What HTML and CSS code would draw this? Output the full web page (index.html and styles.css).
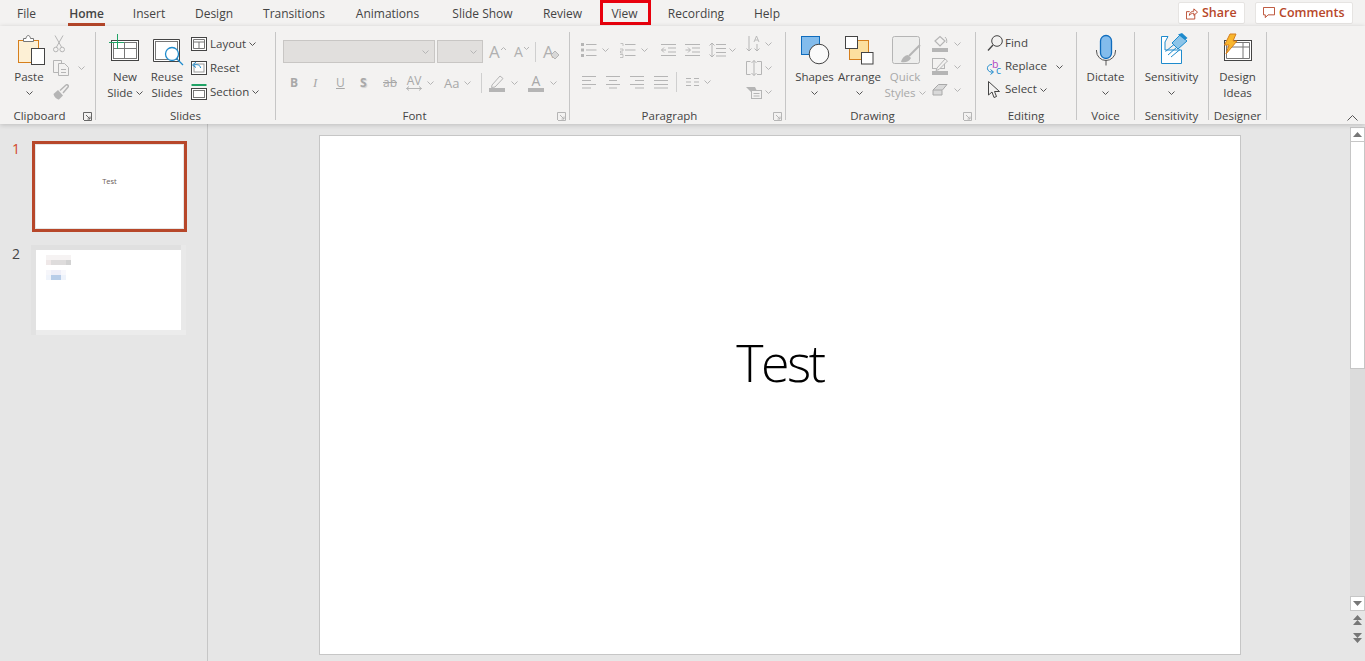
FILE: index.html
```html
<!DOCTYPE html>
<html lang="en">
<head>
<meta charset="utf-8">
<title>PowerPoint</title>
<link rel="stylesheet" href="styles.css">
</head>
<body>
<svg class="sprite" width="0" height="0">
  <symbol id="chev" viewBox="0 0 7 4"><polyline points="0.5,0.5 3.5,3.5 6.5,0.5" fill="none" stroke="currentColor" stroke-width="1"/></symbol>
  <symbol id="launch" viewBox="0 0 9 9"><path d="M0.5 8V0.5H8.5V8.5H1M3 3L7 7M7 4.5V7H4.5" fill="none" stroke="currentColor"/></symbol>
</svg>
<div class="app">
  <header class="tabbar">
    <nav class="tabs">
      <div class="tab"><span>File</span></div>
      <div class="tab tab-active"><span>Home</span></div>
      <div class="tab"><span>Insert</span></div>
      <div class="tab"><span>Design</span></div>
      <div class="tab"><span>Transitions</span></div>
      <div class="tab"><span>Animations</span></div>
      <div class="tab"><span>Slide Show</span></div>
      <div class="tab"><span>Review</span></div>
      <div class="tab tab-marked"><span>View</span></div>
      <div class="tab"><span>Recording</span></div>
      <div class="tab"><span>Help</span></div>
    </nav>
    <div class="actions">
      <button class="action action-share">
        <svg width="12" height="13" viewBox="0 0 13 13" fill="none" stroke="#b7472a"><path d="M9.5 7.5V12.5H0.5V4.5H4M3.5 8.5C4 5.5 6 4 8.5 4V1.5L12.5 5L8.5 8.5V6.2C6.5 6.2 5 7 3.5 8.5Z"/></svg>
        <span>Share</span>
      </button>
      <button class="action action-comments">
        <svg width="12" height="12" viewBox="0 0 13 13" fill="none" stroke="#b7472a"><path d="M0.5 0.5H12.5V8.5H5.5L2.5 11.5V8.5H0.5Z"/></svg>
        <span>Comments</span>
      </button>
    </div>
  </header>

  <section class="ribbon">
    <div class="group g-clipboard">
      <div class="content content-clipboard">
        <div class="big">
          <svg class="big-icon" width="38" height="37" viewBox="0 0 38 37" fill="none">
            <rect x="8.5" y="8.5" width="20" height="22" fill="#fdf0d5" stroke="#d67f1c"/>
            <path d="M13.5 9.5V6.5H16C16.5 2.5 20 2.5 20.500 6.5H23.500V9.500Z" fill="#fff" stroke="#777"/>
            <rect x="21.500" y="16.500" width="13" height="16" fill="#fff" stroke="#444"/>
          </svg>
          <div class="big-line">Paste</div>
          <div class="big-line"><svg class="chev"><use href="#chev"/></svg></div>
        </div>
        <div class="col">
          <div class="item off">
            <svg width="12" height="18" viewBox="0 0 12 18" fill="none" stroke="#b5b5b5"><path d="M2 0.500L8.500 12M10 0.500L3.500 12"/><circle cx="2.800" cy="14.500" r="2.300"/><circle cx="9.200" cy="14.500" r="2.300"/></svg>
          </div>
          <div class="item off">
            <svg width="17" height="16" viewBox="0 0 17 16" fill="none" stroke="#b5b5b5"><path d="M5.500 12.500H0.500V0.500H8.500V3"/><path d="M5.500 3.500H11.500L15.500 7.500V15.500H5.500Z"/><path d="M8 9.500H13M8 12.500H13"/></svg>
            <svg class="chev chev-gap"><use href="#chev"/></svg>
          </div>
          <div class="item off">
            <svg width="16" height="16" viewBox="0 0 16 16"><path d="M0.500 10L5 6L10 11.500L6 15.500C4 15.500 1 13 0.500 10Z" fill="#b5b5b5"/><path d="M7 6.500L13 1C14 0 16 1.500 15 3L10 9" fill="none" stroke="#b5b5b5" stroke-width="1.500"/></svg>
          </div>
        </div>
      </div>
      <div class="label-row"><span class="label">Clipboard</span><svg class="launcher launcher-dark"><use href="#launch"/></svg></div>
    </div>

    <div class="group g-slides">
      <div class="content content-slides">
        <div class="big">
          <svg class="big-icon" width="38" height="37" viewBox="0 0 38 37" fill="none">
            <rect x="5.500" y="8.500" width="27" height="20" fill="#fff" stroke="#444"/>
            <rect x="7.500" y="10.500" width="23" height="16" stroke="#777"/>
            <path d="M18.500 10.500V26.500M7.500 16.500H30.500" stroke="#777"/>
            <path d="M11.500 2V17M3 10.500H18" stroke="#21a366"/>
          </svg>
          <div class="big-line">New</div>
          <div class="big-line">Slide <svg class="chev"><use href="#chev"/></svg></div>
        </div>
        <div class="big">
          <svg class="big-icon" width="38" height="37" viewBox="0 0 38 37" fill="none">
            <path d="M5.500 7.500H31.500V29.500H5.500Z" fill="#fff" stroke="#444"/>
            <rect x="7.500" y="9.500" width="22" height="18" stroke="#777"/>
            <circle cx="24" cy="22" r="6.500" fill="#fff" stroke="#1e8bcd" stroke-width="1.300"/>
            <path d="M29 27L35 33" stroke="#1e8bcd" stroke-width="1.300"/>
          </svg>
          <div class="big-line">Reuse</div>
          <div class="big-line">Slides</div>
        </div>
        <div class="col">
          <div class="item">
            <svg width="16" height="14" viewBox="0 0 16 14" fill="none"><rect x="0.500" y="0.500" width="15" height="13" fill="#fff" stroke="#444"/><path d="M2.500 2.500H13.500V11.500H2.500ZM2.500 5H13.500M8 5V11.500" stroke="#777"/></svg>
            <span>Layout</span><svg class="chev"><use href="#chev"/></svg>
          </div>
          <div class="item">
            <svg width="16" height="14" viewBox="0 0 16 14" fill="none"><rect x="0.500" y="0.500" width="15" height="13" fill="#fff" stroke="#444"/><rect x="3" y="3" width="10" height="8" stroke="#999"/><path d="M9.500 7C9.500 4 6 3 3 4M5 1L1.500 4L5 6.500" stroke="#1e8bcd"/></svg>
            <span>Reset</span>
          </div>
          <div class="item">
            <svg width="16" height="16" viewBox="0 0 16 16" fill="none"><path d="M0.500 1H15.500" stroke="#21a366" stroke-width="2"/><rect x="0.500" y="4.500" width="15" height="11" fill="#fff" stroke="#444"/><rect x="2.500" y="6.500" width="11" height="7" stroke="#777"/></svg>
            <span>Section</span><svg class="chev"><use href="#chev"/></svg>
          </div>
        </div>
      </div>
      <div class="label-row"><span class="label">Slides</span></div>
    </div>

    <div class="group g-font">
      <div class="content content-font off">
        <div class="font-row1">
          <div class="combo combo-name"><svg class="chev"><use href="#chev"/></svg></div>
          <div class="combo combo-size"><svg class="chev"><use href="#chev"/></svg></div>
          <div class="glyph-btn glyph-a-big">A<svg class="caret" width="5" height="3" viewBox="0 0 5 3"><polyline points="0,3 2.500,0.500 5,3" fill="none" stroke="#b5b5b5"/></svg></div>
          <div class="glyph-btn glyph-a-small">A<svg class="caret" width="5" height="3" viewBox="0 0 5 3"><polyline points="0,0 2.500,2.500 5,0" fill="none" stroke="#b5b5b5"/></svg></div>
          <div class="vsep vsep-short"></div>
          <div class="glyph-btn glyph-a-clear">A<svg width="8" height="8" viewBox="0 0 8 8"><path d="M0 4L4 0L8 4L4 8Z" fill="#d8d8d8" stroke="#b5b5b5"/></svg></div>
        </div>
        <div class="font-row2">
          <span class="tb tb-b">B</span>
          <span class="tb tb-i">I</span>
          <span class="tb tb-u">U</span>
          <span class="tb tb-s">S</span>
          <span class="tb tb-strike">ab</span>
          <span class="tb tb-av">AV<svg width="16" height="5" viewBox="0 0 16 5" fill="none" stroke="#b5b5b5"><path d="M0.500 2.500H15.500M3 0.500L0.500 2.500L3 4.500M13 0.500L15.500 2.500L13 4.500"/></svg></span>
          <svg class="chev"><use href="#chev"/></svg>
          <span class="tb tb-aa">Aa</span>
          <svg class="chev"><use href="#chev"/></svg>
          <div class="vsep vsep-tall"></div>
          <svg width="16" height="18" viewBox="0 0 16 18" fill="none"><path d="M3 11L11 2L14 4.500L6 13L2.500 13.500Z" stroke="#b5b5b5"/><rect y="14" width="16" height="4" fill="#b5b5b5"/></svg>
          <svg class="chev"><use href="#chev"/></svg>
          <span class="tb tb-color">A</span>
          <svg class="chev"><use href="#chev"/></svg>
        </div>
      </div>
      <div class="label-row"><span class="label">Font</span><svg class="launcher"><use href="#launch"/></svg></div>
    </div>

    <div class="group g-para">
      <div class="content content-para off">
        <div class="para-left">
          <div class="para-row1">
            <svg width="16" height="16" viewBox="0 0 16 16" fill="none" stroke="#b5b5b5"><path d="M0 2.500H3M0 8H3M0 13.500H3" stroke-width="3"/><path d="M5 2.500H15.500M5 8H15.500M5 13.500H15.500"/></svg>
            <svg class="chev"><use href="#chev"/></svg>
            <svg width="16" height="16" viewBox="0 0 16 16" fill="none" stroke="#b5b5b5"><path d="M0.500 1.500H3V4M0 7H3V9H0.500V11H3M0 12.500H3V15.500H0" stroke-width="0.800"/><path d="M5 2.500H15.500M5 8H15.500M5 13.500H15.500"/></svg>
            <svg class="chev"><use href="#chev"/></svg>
            <svg width="15" height="16" viewBox="0 0 15 16" fill="none" stroke="#b5b5b5"><path d="M0 2.500H15M7 6H15M7 10H15M0 13.500H15M5 8H0.500M3 5.500L0.500 8L3 10.500"/></svg>
            <svg width="15" height="16" viewBox="0 0 15 16" fill="none" stroke="#b5b5b5"><path d="M0 2.500H15M7 6H15M7 10H15M0 13.500H15M0.500 8H5M3 5.500L5.500 8L3 10.500"/></svg>
            <svg width="17" height="16" viewBox="0 0 17 16" fill="none" stroke="#b5b5b5"><path d="M3 1V15M0.500 3.500L3 1L5.500 3.500M0.500 12.500L3 15L5.500 12.500M7 2.500H17M7 6.500H17M7 10.500H17M7 14H17"/></svg>
            <svg class="chev"><use href="#chev"/></svg>
          </div>
          <div class="para-row2">
            <svg width="14" height="14" viewBox="0 0 14 14" fill="none" stroke="#b5b5b5"><path d="M0 1.500H14M0 5.500H9M0 9.500H14M0 13H9"/></svg>
            <svg width="14" height="14" viewBox="0 0 14 14" fill="none" stroke="#b5b5b5"><path d="M0 1.500H14M3 5.500H11M0 9.500H14M3 13H11"/></svg>
            <svg width="14" height="14" viewBox="0 0 14 14" fill="none" stroke="#b5b5b5"><path d="M0 1.500H14M5 5.500H14M0 9.500H14M5 13H14"/></svg>
            <svg width="14" height="14" viewBox="0 0 14 14" fill="none" stroke="#b5b5b5"><path d="M0 1.500H14M0 5.500H14M0 9.500H14M0 13H14"/></svg>
            <div class="vsep vsep-tall"></div>
            <svg width="13" height="10" viewBox="0 0 13 10" fill="none" stroke="#b5b5b5"><path d="M0 1.500H5M0 5H5M0 8.500H5M8 1.500H13M8 5H13M8 8.500H13"/></svg>
            <svg class="chev"><use href="#chev"/></svg>
          </div>
        </div>
        <div class="col col-para">
          <div class="item">
            <svg width="19" height="18" viewBox="0 0 19 18" fill="none" stroke="#b5b5b5"><path d="M3 1V16M0.500 13.500L3 16L5.500 13.500M11 9V16M8.500 13.500L11 16L13.500 13.500"/><path d="M8 7L10.500 1L13 7M9 5H12" stroke-width="0.900"/></svg>
            <svg class="chev chev-col"><use href="#chev"/></svg>
          </div>
          <div class="item">
            <svg width="19" height="16" viewBox="0 0 19 16" fill="none" stroke="#b5b5b5"><path d="M4.500 1.500H0.500V14.500H4.500M11 1.500H15.500V14.500H11M8 0.500V15.500M5.500 3L8 0.500L10.500 3M5.500 13L8 15.500L10.500 13"/></svg>
            <svg class="chev chev-col"><use href="#chev"/></svg>
          </div>
          <div class="item">
            <svg width="19" height="13" viewBox="0 0 19 13"><path d="M0 1H9L11 5L9 6H5Z" fill="#b5b5b5"/><rect x="5.500" y="4.500" width="10" height="8" fill="#f3f2f1" stroke="#b5b5b5"/><path d="M7.500 7.500H13.500M7.500 10H13.500" stroke="#b5b5b5"/></svg>
            <svg class="chev chev-col"><use href="#chev"/></svg>
          </div>
        </div>
      </div>
      <div class="label-row"><span class="label">Paragraph</span><svg class="launcher"><use href="#launch"/></svg></div>
    </div>

    <div class="group g-drawing">
      <div class="content content-drawing">
        <div class="big big-45">
          <svg class="big-icon" width="45" height="37" viewBox="0 0 45 37">
            <rect x="9.500" y="4.500" width="18" height="18" fill="#83bcec" stroke="#0f6cbd"/>
            <circle cx="27" cy="22" r="9.800" fill="#fafafa" stroke="#444"/>
          </svg>
          <div class="big-line">Shapes</div>
          <div class="big-line"><svg class="chev"><use href="#chev"/></svg></div>
        </div>
        <div class="big big-45">
          <svg class="big-icon" width="45" height="37" viewBox="0 0 45 37">
            <rect x="12.500" y="8.500" width="19" height="19" fill="#fcdf9e" stroke="#d67f1c"/>
            <rect x="8.500" y="4.500" width="12" height="12" fill="#fff" stroke="#444"/>
            <rect x="24.500" y="20.500" width="11.500" height="11.500" fill="#fff" stroke="#444"/>
          </svg>
          <div class="big-line">Arrange</div>
          <div class="big-line"><svg class="chev"><use href="#chev"/></svg></div>
        </div>
        <div class="big big-46 off-text">
          <svg class="big-icon" width="46" height="37" viewBox="0 0 46 37">
            <rect x="10.500" y="4.500" width="27" height="27" rx="2" fill="#eeeeed" stroke="#b5b5b5"/>
            <path d="M38 13L27 24" stroke="#b5b5b5" stroke-width="2"/>
            <path d="M19 30C20 26 23 23 26 23L29 26C27 30 23 31 19 30Z" fill="#b5b5b5"/>
          </svg>
          <div class="big-line">Quick</div>
          <div class="big-line">Styles <svg class="chev"><use href="#chev"/></svg></div>
        </div>
        <div class="col col-drawing off">
          <div class="item">
            <svg width="16" height="18" viewBox="0 0 16 18" fill="none"><path d="M3 6L8 1.500L13 6L8 11Z" stroke="#b5b5b5" stroke-width="1.200"/><path d="M13 2C15 4 15 6 14.500 8" stroke="#b5b5b5"/><rect y="13" width="16" height="4" fill="#b5b5b5"/></svg>
            <svg class="chev chev-draw"><use href="#chev"/></svg>
          </div>
          <div class="item">
            <svg width="16" height="17" viewBox="0 0 16 17" fill="none"><rect x="0.500" y="0.500" width="12" height="10" stroke="#b5b5b5"/><path d="M5 10L13 1L15.500 3L7 11.500L4 12.500Z" fill="#f3f2f1" stroke="#b5b5b5"/><rect y="13" width="16" height="4" fill="#b5b5b5"/></svg>
            <svg class="chev chev-draw"><use href="#chev"/></svg>
          </div>
          <div class="item">
            <svg width="16" height="13" viewBox="0 0 16 13" fill="none"><path d="M1 7L6.500 1.500H15L10 7.500V12H1Z" fill="#d9d9d9" stroke="#a8a8a8"/><path d="M1 7H10" stroke="#a8a8a8"/></svg>
            <svg class="chev chev-draw"><use href="#chev"/></svg>
          </div>
        </div>
      </div>
      <div class="label-row"><span class="label">Drawing</span><svg class="launcher"><use href="#launch"/></svg></div>
    </div>

    <div class="group g-editing">
      <div class="content content-editing">
        <div class="edit-row">
          <svg width="18" height="18" viewBox="0 0 18 18" fill="none" stroke="#444"><circle cx="10" cy="6" r="5.300"/><path d="M6 10L1 15.500" stroke-width="1.300"/></svg>
          <span>Find</span>
        </div>
        <div class="edit-row">
          <svg width="18" height="18" viewBox="0 0 18 18" fill="none"><text x="5" y="9.500" class="rep-b">b</text><text x="9" y="16" class="rep-c">c</text><path d="M5 6.500C1.500 6.500 0 9 0.500 11C1 13 3 14.500 6 14M3.500 11.500L6.500 14L3.500 16.500" stroke="#1e8bcd"/></svg>
          <span>Replace</span><svg class="chev chev-replace"><use href="#chev"/></svg>
        </div>
        <div class="edit-row">
          <svg width="18" height="18" viewBox="0 0 18 18" fill="none" stroke="#444"><path d="M1.500 0.500V14L5 11L7 16.500L9.500 15.500L7.500 10.500H12.500Z"/></svg>
          <span>Select</span><svg class="chev"><use href="#chev"/></svg>
        </div>
      </div>
      <div class="label-row"><span class="label">Editing</span></div>
    </div>

    <div class="group g-voice">
      <div class="content">
        <div class="big big-full">
          <svg class="big-icon" width="57" height="37" viewBox="0 0 57 37" fill="none">
            <rect x="23.500" y="3.500" width="11" height="23" rx="5.500" fill="#83bcec" stroke="#0f6cbd" stroke-width="1.300"/>
            <path d="M19.500 18V19A9.500 9.500 0 0 0 38.500 19V18M29 28.500V33.500" stroke="#555"/>
          </svg>
          <div class="big-line">Dictate</div>
          <div class="big-line"><svg class="chev"><use href="#chev"/></svg></div>
        </div>
      </div>
      <div class="label-row"><span class="label">Voice</span></div>
    </div>

    <div class="group g-sens">
      <div class="content">
        <div class="big big-full">
          <svg class="big-icon" width="73" height="37" viewBox="0 0 73 37" fill="none">
            <path d="M26.500 4.500H33L30 10V18H46.500V31.500H26.500Z" fill="#fff" stroke="#1e8bcd"/>
            <path d="M33 23L42 15M30.500 19.500L39 12.500M36 25L45 17.500" stroke="#1e8bcd"/>
            <path d="M37 11L45 3L52 9L43 17Z" fill="#8cc4e8" stroke="#1e8bcd"/>
            <path d="M43 2.500L47 1L52.500 6L50 8Z" fill="#1e8bcd"/>
          </svg>
          <div class="big-line">Sensitivity</div>
          <div class="big-line"><svg class="chev"><use href="#chev"/></svg></div>
        </div>
      </div>
      <div class="label-row"><span class="label">Sensitivity</span></div>
    </div>

    <div class="group g-designer">
      <div class="content">
        <div class="big big-full">
          <svg class="big-icon" width="57" height="37" viewBox="0 0 57 37" fill="none">
            <rect x="15.500" y="8.500" width="27" height="20" fill="#fff" stroke="#444"/>
            <path d="M17.500 10.500H40.500V26.500H17.500ZM34 10.500V26.500M17.500 15H40.500" stroke="#777"/>
            <path d="M21 2H27L24 9H28L17 22L20 13H15.500Z" fill="#f8b62d" stroke="#d67f1c"/>
          </svg>
          <div class="big-line">Design</div>
          <div class="big-line">Ideas</div>
        </div>
      </div>
      <div class="label-row"><span class="label">Designer</span></div>
    </div>

    <svg class="collapse" width="11" height="6" viewBox="0 0 11 6"><polyline points="0.500,5.500 5.500,0.500 10.500,5.500" fill="none" stroke="#555"/></svg>
  </section>

  <main class="workspace">
    <aside class="thumbs">
      <div class="thumb-row">
        <span class="num num-active">1</span>
        <div class="thumb thumb-active"><span>Test</span></div>
      </div>
      <div class="thumb-row">
        <span class="num num-second">2</span>
        <svg width="155" height="90" viewBox="0 0 155 90" shape-rendering="crispEdges">
          <rect width="155" height="90" fill="#e9e9e9"/>
          <rect width="150" height="5" fill="#e0e0e0"/>
          <rect y="5" width="5" height="85" fill="#e2e2e2"/>
          <rect x="5" y="85" width="150" height="5" fill="#ececec"/>
          <rect x="5" y="5" width="145" height="80" fill="#fff"/>
          <rect x="15" y="10" width="25" height="5" fill="#f6f3f3"/>
          <rect x="15" y="15" width="5" height="5" fill="#efe8e8"/>
          <rect x="20" y="15" width="15" height="5" fill="#dedcdc"/>
          <rect x="35" y="15" width="5" height="5" fill="#d2d2d2"/>
          <rect x="15" y="25" width="5" height="5" fill="#f6f6fa"/>
          <rect x="20" y="25" width="10" height="5" fill="#eeeef8"/>
          <rect x="30" y="25" width="5" height="5" fill="#f8f8fc"/>
          <rect x="15" y="30" width="5" height="5" fill="#f0f4fb"/>
          <rect x="20" y="30" width="10" height="5" fill="#b8cde8"/>
          <rect x="30" y="30" width="5" height="5" fill="#eef3fb"/>
        </svg>
      </div>
    </aside>
    <div class="editor">
      <div class="slide"><span>Test</span></div>
    </div>
    <div class="scrollbar">
      <div class="sb-btn"><svg width="9" height="5" viewBox="0 0 9 5"><path d="M0 5L4.500 0L9 5Z" fill="#777"/></svg></div>
      <div class="sb-thumb"></div>
      <div class="sb-track"></div>
      <div class="sb-btn"><svg width="9" height="5" viewBox="0 0 9 5"><path d="M0 0L4.500 5L9 0Z" fill="#777"/></svg></div>
      <div class="sb-nav">
        <svg width="9" height="10" viewBox="0 0 9 10"><path d="M0 5L4.500 0L9 5ZM0 10L4.500 5L9 10Z" fill="#777"/></svg>
        <svg width="9" height="10" viewBox="0 0 9 10"><path d="M0 0L4.500 5L9 0ZM0 5L4.500 10L9 5Z" fill="#777"/></svg>
      </div>
    </div>
  </main>
</div>
</body>
</html>
```

FILE: styles.css
```css
* { box-sizing: border-box; }
html, body { margin: 0; padding: 0; height: 100%; overflow: hidden; }
body {
  font-family: "Open Sans", "Noto Sans", "Liberation Sans", sans-serif;
  font-size: 11.5px;
  color: #444;
  background: #e6e6e6;
}
.sprite { position: absolute; }
svg { display: block; flex: none; }
.app { width: 1365px; height: 661px; display: flex; flex-direction: column; overflow: hidden; }

/* Title tabs */
.tabbar { height: 26px; flex: none; background: #f3f2f1; display: flex; }
.tabs {
  display: grid;
  grid-template-columns: 47px 73px 52px 78px 82px 105px 85px 75px 51px 90px 52px;
  margin-left: 3px;
}
.tab { height: 26px; padding-top: 5px; display: flex; justify-content: center; font-size: 12px; line-height: 17px; color: #444; }
.tab span { display: block; height: 21px; }
.tab-active span { border-bottom: 3px solid #b7472a; font-weight: 600; padding: 0 1px; color: #444; }
.tab-marked { border: 3px solid #e8000d; padding-top: 2px; padding-right: 2px; height: 25px; }
.actions { margin-left: auto; margin-right: 12px; display: flex; gap: 10px; padding-top: 2px; }
.action {
  height: 22px; background: #fff; border: 1px solid #e6e4e2; border-radius: 2px;
  display: flex; align-items: center; gap: 4px; padding: 0;
  font: 600 12.5px/20px "Open Sans", sans-serif; color: #b7472a;
}
.action-share { width: 67px; padding-left: 7px; }
.action-comments { width: 98px; padding-left: 7px; }

/* Ribbon */
.ribbon {
  height: 98px; flex: none; background: #f3f2f1; display: flex; padding-top: 6px;
  position: relative; z-index: 1; box-shadow: 0 1px 5px rgba(0,0,0,.18);
}
.group { height: 88px; flex: none; border-right: 1px solid #c6c6c6; display: flex; flex-direction: column; }
.g-clipboard { width: 96px; }
.g-slides { width: 180px; }
.g-font { width: 294px; }
.g-para { width: 216px; }
.g-drawing { width: 190px; }
.g-editing { width: 101px; }
.g-voice { width: 58px; }
.g-sens { width: 74px; }
.g-designer { width: 58px; }
.content { height: 76px; flex: none; display: flex; }
.label-row { display: flex; height: 16px; line-height: 16px; flex: none; }
.label { flex: 1; text-align: center; white-space: nowrap; }
.launcher { width: 9px; height: 9px; margin: 4px 3px 0 4px; color: #b5b5b5; }
.launcher-dark { color: #666; }
.collapse { margin: 83px 7px 0 auto; }

.big { width: 38px; display: flex; flex-direction: column; align-items: center; flex: none; }
.big-45 { width: 45px; }
.big-46 { width: 46px; }
.big-full { width: 100%; flex: 1; }
.big-icon { height: 37px; }
.big-line { height: 16px; line-height: 16px; display: flex; align-items: center; justify-content: center; gap: 3px; white-space: nowrap; }
.chev { width: 7px; height: 4px; color: #555; }
.off .chev, .off-text .chev { color: #b5b5b5; }
.off-text { color: #a8a8a8; }

.col { display: flex; flex-direction: column; }
.item { height: 24px; display: flex; align-items: center; gap: 3px; white-space: nowrap; }
.item span, .edit-row span { margin-bottom: 2px; }
.content-clipboard { padding-left: 10px; display: grid; grid-template-columns: 43px auto; justify-content: start; }
.chev-gap { margin-left: 5px; }
.content-slides { padding-left: 10px; display: grid; grid-template-columns: 42px 43px auto; justify-content: start; }

/* Font */
.content-font { flex-direction: column; padding: 8px 0 0 7px; color: #a8a8a8; }
.font-row1 { display: grid; grid-template-columns: 154px 52px 25px 21px 8px auto; justify-content: start; align-items: center; height: 23px; justify-items: start; }
.combo { height: 23px; background: #e1dfdd; border: 1px solid #c8c6c4; display: flex; align-items: center; justify-content: flex-end; padding-right: 5px; }
.combo-name { width: 152px; }
.combo-size { width: 46px; }
.glyph-btn { display: flex; color: #b0b0b0; line-height: 20px; }
.glyph-a-big { font-size: 17px; }
.glyph-a-small { font-size: 14px; }
.glyph-a-clear { font-size: 17px; align-items: flex-end; }
.glyph-a-clear svg { margin-left: -3px; margin-bottom: 3px; }
.caret { margin: 5px 0 0 1px; }
.vsep { width: 1px; background: #cfcfcf; }
.vsep-short { height: 20px; }
.vsep-tall { height: 20px; }
.font-row2 {
  display: grid; grid-template-columns: 23px 23px 24px 23px 23px 21px 17px 20px 17px 8px 22px 17px 22px auto;
  justify-content: start; justify-items: start; align-items: center; height: 22px; margin: 9px 0 0 7px;
}
.tb { font-size: 12px; color: #a8a8a8; line-height: 16px; }
.tb-b { font-weight: 700; }
.tb-i { font-style: italic; font-family: "Liberation Serif", serif; font-size: 13px; }
.tb-u { text-decoration: underline; }
.tb-s { font-weight: 700; text-shadow: 1px 1px 1px #d0d0d0; }
.tb-strike { text-decoration: line-through; }
.tb-av { font-size: 12px; line-height: 11px; display: flex; flex-direction: column; align-items: center; }
.tb-aa { font-size: 13px; }
.tb-color { width: 16px; text-align: center; border-bottom: 4px solid #b5b5b5; font-size: 14px; line-height: 14px; }

/* Paragraph */
.content-para { padding-left: 11px; }
.para-left { width: 165px; flex: none; padding-top: 10px; }
.para-row1 { height: 16px; display: grid; grid-template-columns: 21px 18px 21px 20px 24px 24px 20px auto; justify-content: start; justify-items: start; align-items: center; }
.para-row2 { height: 20px; margin: 14px 0 0 1px; display: grid; grid-template-columns: 24px 24px 24px 22px 10px 18px auto; justify-content: start; justify-items: start; align-items: center; }
.chev-col { margin-left: -3px; }

/* Drawing */
.content-drawing { padding-left: 6px; }
.col-drawing { margin-left: 4px; }
.col-drawing .item { height: 23px; }
.chev-draw { margin-left: 3px; }

/* Editing */
.content-editing { flex-direction: column; padding-left: 11px; }
.edit-row { height: 23px; display: flex; align-items: center; white-space: nowrap; }
.edit-row svg { overflow: visible; }
.edit-row span { margin-right: 3px; }
.chev-replace { margin-left: 6px; }
.rep-b { font-size: 10.5px; fill: #b146c2; font-family: "Open Sans", sans-serif; }
.rep-c { font-size: 10.5px; fill: #1e8bcd; font-family: "Open Sans", sans-serif; }

/* Workspace */
.workspace { flex: 1; display: flex; min-height: 0; }
.thumbs { width: 208px; flex: none; border-right: 1px solid #c6c6c6; padding-top: 17px; }
.thumb-row { display: flex; height: 104px; }
.num { width: 31px; padding-left: 12px; font-size: 14px; line-height: 16px; color: #444; }
.num-active { color: #d24726; width: 32px; }
.num-second { padding-top: 1px; }
.thumb { width: 155px; height: 91px; background: #fff; border: 3px solid #b7472a; box-shadow: inset 0 0 0 1px #e6e6e6; display: flex; align-items: center; justify-content: center; padding-bottom: 11px; }
.thumb span { font-size: 7.5px; line-height: 9px; color: #6b5c58; }
.editor { flex: 1; padding: 11px 0 0 111px; min-width: 0; }
.slide {
  width: 922px; height: 520px; background: #fff; border: 1px solid #c6c6c6;
  display: flex; justify-content: center; align-items: center; padding-bottom: 66px;
}
.slide span { font-size: 52px; font-weight: 350; letter-spacing: -2.5px; color: #000; line-height: 60px; }
.scrollbar { width: 15px; flex: none; padding-top: 3px; display: flex; flex-direction: column; }
.sb-btn { height: 15px; flex: none; background: #fff; border: 1px solid #c6c6c6; display: flex; align-items: center; justify-content: center; }
.sb-thumb { height: 227px; flex: none; background: #fff; border: 1px solid #c6c6c6; border-top: 0; }
.sb-track { height: 227px; flex: none; background: #dcdcdc; }
.sb-nav { display: flex; flex-direction: column; align-items: center; gap: 8px; padding-top: 4px; }
```
